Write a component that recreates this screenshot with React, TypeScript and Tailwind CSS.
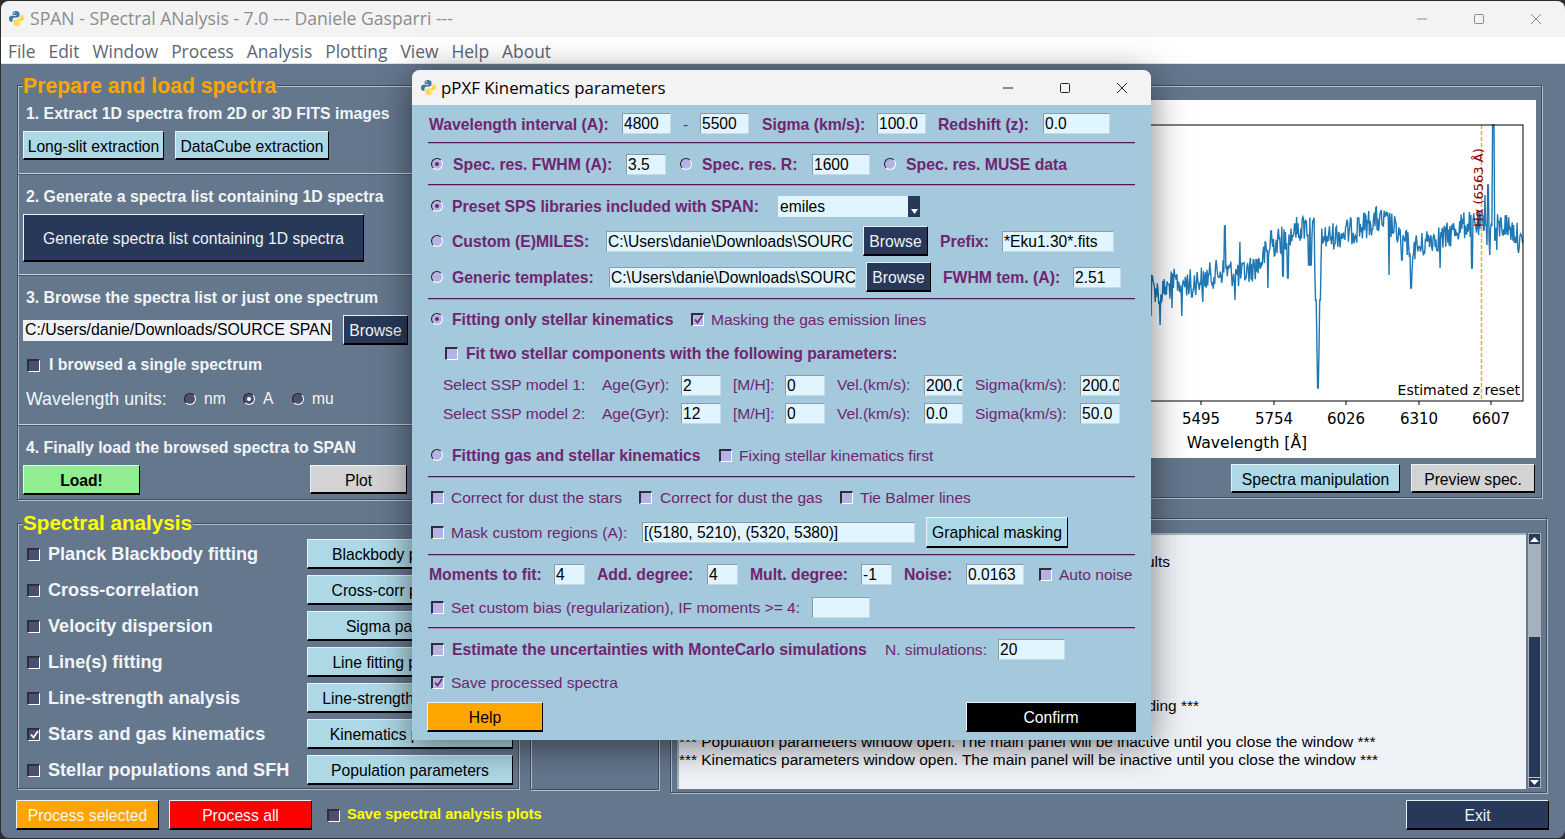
import type { ReactNode } from 'react';

const purple = 'text-[#702570]';

function PyLogo() {
  const snake =
    'M8 1C5.2 1 4.6 2.1 4.6 3.4V5h3.8v.8H3C1.6 5.8 1 7.2 1 8.8s.7 3 2 3h1.5V9.9c0-1.3 1-2.3 2.3-2.3h2.7c1.1 0 2-.9 2-2V3.4C11.5 2 10 1 8 1z';
  return (
    <svg width="17" height="17" viewBox="0 0 17 17" className="shrink-0">
      <path d={snake} fill="#3b77a8" />
      <path d={snake} fill="#ffd845" transform="rotate(180 8.5 8.5)" />
      <circle cx="6.3" cy="3" r=".7" fill="#fff" />
      <circle cx="10.7" cy="14" r=".7" fill="#fff" />
    </svg>
  );
}

function WinButtons({ color, xs }: { color: string; xs: string }) {
  return (
    <div className={`flex items-center ${xs}`}>
      <svg width="12" height="12" viewBox="0 0 12 12">
        <path d="M1 6h10" stroke={color} strokeWidth="1" />
      </svg>
      <svg width="12" height="12" viewBox="0 0 12 12">
        <rect x="1.5" y="1.5" width="9" height="9" rx="1" fill="none" stroke={color} strokeWidth="1" />
      </svg>
      <svg width="12" height="12" viewBox="0 0 12 12">
        <path d="M1 1l10 10M11 1L1 11" stroke={color} strokeWidth="1" />
      </svg>
    </div>
  );
}

function Check({ on, dark, className = '' }: { on?: boolean; dark?: boolean; className?: string }) {
  return (
    <span
      className={`w-[13px] h-[13px] shrink-0 flex items-center justify-center border-t-2 border-l-2 border-b border-r border-t-[#2f2f3a] border-l-[#2f2f3a] border-b-white border-r-white ${
        dark ? 'bg-[#4c5070]' : 'bg-[#b3b3e6]'
      } ${className}`}
    >
      {on && (
        <svg width="9" height="9" viewBox="0 0 9 9">
          <path d="M1 4.5l2.5 3L8 1" fill="none" stroke={dark ? '#fff' : '#702570'} strokeWidth="1.7" />
        </svg>
      )}
    </span>
  );
}

function Radio({ on, dark, className = '' }: { on?: boolean; dark?: boolean; className?: string }) {
  return (
    <span
      className={`w-[12px] h-[12px] shrink-0 rounded-full flex items-center justify-center border border-t-[#222] border-l-[#222] border-b-white border-r-white ${
        dark ? 'bg-[#4c5070]' : 'bg-[#b3b3e6]'
      } ${className}`}
    >
      {on && <span className={`w-[4px] h-[4px] rounded-full ${dark ? 'bg-white' : 'bg-[#702570]'}`} />}
    </span>
  );
}

function Field({ value, className = '' }: { value?: string; className?: string }) {
  return (
    <input
      readOnly
      value={value ?? ''}
      className={`h-[21px] shrink-0 bg-[#e0f5ff] text-black text-[15.6px] leading-[19px] pl-[1px] pt-[1px] border border-t-[#8b9ba8] border-l-[#8b9ba8] border-b-[#c6dbe6] border-r-[#c6dbe6] outline-none ${className}`}
    />
  );
}

function Bold({ children, className = '' }: { children: ReactNode; className?: string }) {
  return <span className={`font-bold text-[15.75px] pt-[2px] whitespace-nowrap shrink-0 ${purple} ${className}`}>{children}</span>;
}

function Plain({ children, className = '' }: { children: ReactNode; className?: string }) {
  return <span className={`text-[15.55px] pt-[2px] whitespace-nowrap shrink-0 ${purple} ${className}`}>{children}</span>;
}

function Sep() {
  return <div className="h-[2px] mx-[16px] border-t border-[#4d1a55] bg-[#b08cc0]" />;
}

function Btn({ children, className = '' }: { children: ReactNode; className?: string }) {
  return (
    <button
      className={`shrink-0 flex items-center justify-center text-[15.7px] pt-[3px] whitespace-nowrap overflow-hidden border border-t-[#e8f2f6] border-l-[#e8f2f6] border-b-2 border-b-black border-r-black ${className}`}
    >
      {children}
    </button>
  );
}

const darkBtn = 'bg-[#283858] text-[#eef2f6] border-t-[#9aa6b4] border-l-[#9aa6b4]';
const blueBtn = 'bg-[#add8e6] text-black';

const groove = 'border border-[#3f4e60] shadow-[inset_1px_1px_0_#b4bfca,1px_1px_0_#b4bfca]';

function Divider() {
  return <div className="h-[2px] border-t border-[#c5ced8] bg-[#4a5a6c]" />;
}

function Heading({ children, className = '' }: { children: ReactNode; className?: string }) {
  return <div className={`h-[20px] leading-[20px] pl-[3px] font-bold text-[15.85px] text-[#f2f5f8] whitespace-nowrap ${className}`}>{children}</div>;
}

const analyses = [
  { label: 'Planck Blackbody fitting', btn: 'Blackbody parameters' },
  { label: 'Cross-correlation', btn: 'Cross-corr parameters' },
  { label: 'Velocity dispersion', btn: 'Sigma parameters' },
  { label: 'Line(s) fitting', btn: 'Line fitting parameters' },
  { label: 'Line-strength analysis', btn: 'Line-strength parameters' },
  { label: 'Stars and gas kinematics', btn: 'Kinematics parameters', on: true },
  { label: 'Stellar populations and SFH', btn: 'Population parameters' },
];

// spectrum, in page coordinates
const baseline: [number, number][] = [
  [1151, 284], [1160, 294], [1175, 282], [1190, 283], [1205, 278], [1225, 270], [1240, 276], [1260, 263],
  [1270, 246], [1285, 238], [1300, 228], [1310, 226], [1325, 238], [1345, 233], [1360, 228], [1375, 220],
  [1390, 224], [1405, 243], [1420, 248], [1430, 238], [1445, 238], [1460, 226], [1475, 224], [1490, 230],
  [1505, 225], [1515, 232], [1523, 248],
];
const spikes: Record<number, number> = {
  1151: 316, 1160: 325, 1172: 308, 1182: 316, 1192: 297, 1203: 302, 1225: 226, 1235: 300, 1240: 242, 1268: 288,
  1271: 231, 1283: 276, 1288: 278, 1295: 224, 1305: 222, 1309: 265, 1311: 265, 1313: 221, 1315: 270, 1316: 300,
  1317: 345, 1318: 388, 1319: 350, 1320: 300, 1321: 260, 1358: 218, 1366: 216, 1389: 275, 1394: 232, 1402: 260,
  1411: 288, 1412: 270, 1440: 268, 1472: 268, 1484: 230, 1485: 195, 1486: 225, 1487: 245, 1488: 185, 1489: 240,
  1490: 255, 1492: 225, 1493: 125, 1494: 125, 1495: 240, 1497: 250,
};

function spectrumPoints() {
  let seed = 12345;
  const pts: string[] = [];
  for (let x = 1130; x <= 1523; x += 0.7) {
    const px = Math.round(x);
    let i = 0;
    while (i < baseline.length - 2 && baseline[i + 1][0] < x) i++;
    const [x0, y0] = baseline[i];
    const [x1, y1] = baseline[i + 1];
    const base = y0 + ((y1 - y0) * (x - x0)) / (x1 - x0);
    seed = (seed * 1103515245 + 12345) % 2147483648;
    const noise = (seed / 2147483648 - 0.5) * 28;
    pts.push(`${x.toFixed(1)},${(spikes[px] ?? base + noise).toFixed(1)}`);
  }
  return pts.join(' ');
}

function Chart() {
  const ticks = [
    { x: 1201, t: '5495' },
    { x: 1274, t: '5754' },
    { x: 1346, t: '6026' },
    { x: 1419, t: '6310' },
    { x: 1491, t: '6607' },
  ];
  return (
    <svg width="400" height="358" viewBox="1136 100 400 358" className="block bg-white" fontFamily="'DejaVu Sans', sans-serif">
      <polyline points={spectrumPoints()} fill="none" stroke="#1f77b4" strokeWidth="1.4" />
      <path d="M1481.5 125V401" stroke="#ffa500" strokeWidth="1.4" strokeDasharray="4 2" />
      <rect x="1100" y="125" width="423" height="276" fill="none" stroke="#000" strokeWidth="1" />
      {ticks.map((t) => (
        <g key={t.t}>
          <path d={`M${t.x} 401v4`} stroke="#000" strokeWidth="1" />
          <text x={t.x} y="424" textAnchor="middle" fontSize="15" fill="#000">
            {t.t}
          </text>
        </g>
      ))}
      <text x="1247" y="448" textAnchor="middle" fontSize="15.6" fill="#000">
        Wavelength [Å]
      </text>
      <text x="1520" y="395" textAnchor="end" fontSize="14" fill="#000">
        Estimated z reset
      </text>
      <text transform="translate(1483 227) rotate(-90)" fontSize="13" fill="#8b0000">
        Hα (6563 Å)
      </text>
    </svg>
  );
}

function KinematicsDialog() {
  return (
    <div className="absolute left-[412px] top-[70px] w-[739px] h-[670px] rounded-t-lg overflow-hidden bg-[#a4c8dc] shadow-[0_6px_36px_rgba(0,0,0,0.5)]">
      <div className="h-[35px] bg-[#f3f3f3] flex items-center pl-[8px] font-['Open_Sans',sans-serif] text-[16.85px] text-black relative">
        <PyLogo />
        <span className="ml-[4px]">pPXF Kinematics parameters</span>
        <WinButtons color="#222" xs="absolute left-[590px] gap-[45px]" />
      </div>

      {/* Wavelength row */}
      <div className="h-[37px] flex items-center pl-[17px]">
        <Bold className="w-[193px]">Wavelength interval (A):</Bold>
        <Field value="4800" className="w-[49px]" />
        <Plain className="w-[29px] text-center">-</Plain>
        <Field value="5500" className="w-[49px]" />
        <Bold className="w-[128px] pl-[13px]">Sigma (km/s):</Bold>
        <Field value="100.0" className="w-[49px]" />
        <Bold className="ml-[12px] w-[105px]">Redshift (z):</Bold>
        <Field value="0.0" className="w-[67px]" />
      </div>
      <Sep />
      <div className="h-[40px] flex items-center pl-[19px]">
        <Radio on />
        <Bold className="ml-[10px] w-[173px]">Spec. res. FWHM (A):</Bold>
        <Field value="3.5" className="w-[40px]" />
        <Radio className="ml-[14px]" />
        <Bold className="ml-[10px] w-[110px]">Spec. res. R:</Bold>
        <Field value="1600" className="w-[58px]" />
        <Radio className="ml-[14px]" />
        <Bold className="ml-[10px]">Spec. res. MUSE data</Bold>
      </div>
      <Sep />
      <div className="h-[40px] flex items-center pl-[19px]">
        <Radio on />
        <Bold className="ml-[9px] w-[326px]">Preset SPS libraries included with SPAN:</Bold>
        <div className="w-[142px] h-[21px] bg-[#e0f5ff] flex justify-between pl-[2px] text-[15.6px] leading-[21px] text-black">
          emiles
          <span className="w-[12px] h-[21px] bg-[#283858] flex items-end justify-center pb-[3px]">
            <svg width="7" height="5" viewBox="0 0 7 5">
              <path d="M0 0h7L3.5 5z" fill="#fff" />
            </svg>
          </span>
        </div>
      </div>
      <div className="h-[30px] flex items-center pl-[19px]">
        <Radio />
        <Bold className="ml-[9px] w-[154px]">Custom (E)MILES:</Bold>
        <Field value="C:\Users\danie\Downloads\SOURCE SPAN" className="w-[247px]" />
        <Btn className={`w-[65px] h-[30px] ml-[10px] ${darkBtn}`}>Browse</Btn>
        <Bold className="ml-[12px] w-[62px]">Prefix:</Bold>
        <Field value="*Eku1.30*.fits" className="w-[112px]" />
      </div>
      <div className="h-[42px] flex items-center pl-[19px]">
        <Radio />
        <Bold className="ml-[9px] w-[157px]">Generic templates:</Bold>
        <Field value="C:\Users\danie\Downloads\SOURCE SPAN" className="w-[247px]" />
        <Btn className={`w-[65px] h-[30px] ml-[10px] ${darkBtn}`}>Browse</Btn>
        <Bold className="ml-[12px] w-[130px]">FWHM tem. (A):</Bold>
        <Field value="2.51" className="w-[48px]" />
      </div>
      <Sep />
      <div className="h-[38px] flex items-center pl-[19px]">
        <Radio on />
        <Bold className="ml-[9px] w-[239px]">Fitting only stellar kinematics</Bold>
        <Check on />
        <Plain className="ml-[7px]">Masking the gas emission lines</Plain>
      </div>
      <div className="h-[30px] flex items-center pl-[33px]">
        <Check />
        <Bold className="ml-[8px]">Fit two stellar components with the following parameters:</Bold>
      </div>
      <div className="h-[32px] flex items-end pb-[4px] pl-[31px]">
        <Plain className="w-[159px]">Select SSP model 1:</Plain>
        <Plain className="w-[79px]">Age(Gyr):</Plain>
        <Field value="2" className="w-[40px]" />
        <Plain className="w-[64px] pl-[12px]">[M/H]:</Plain>
        <Field value="0" className="w-[40px]" />
        <Plain className="w-[99px] pl-[12px]">Vel.(km/s):</Plain>
        <Field value="200.0" className="w-[39px]" />
        <Plain className="w-[117px] pl-[12px]">Sigma(km/s):</Plain>
        <Field value="200.0" className="w-[40px]" />
      </div>
      <div className="h-[26px] flex items-center pl-[31px]">
        <Plain className="w-[159px]">Select SSP model 2:</Plain>
        <Plain className="w-[79px]">Age(Gyr):</Plain>
        <Field value="12" className="w-[40px]" />
        <Plain className="w-[64px] pl-[12px]">[M/H]:</Plain>
        <Field value="0" className="w-[40px]" />
        <Plain className="w-[99px] pl-[12px]">Vel.(km/s):</Plain>
        <Field value="0.0" className="w-[39px]" />
        <Plain className="w-[117px] pl-[12px]">Sigma(km/s):</Plain>
        <Field value="50.0" className="w-[40px]" />
      </div>
      <div className="h-[42px] mt-[8px] flex items-center pl-[19px]">
        <Radio />
        <Bold className="ml-[9px] w-[267px]">Fitting gas and stellar kinematics</Bold>
        <Check />
        <Plain className="ml-[7px]">Fixing stellar kinematics first</Plain>
      </div>
      <Sep />
      <div className="h-[38px] flex items-center pl-[19px]">
        <Check />
        <Plain className="ml-[7px] w-[188px]">Correct for dust the stars</Plain>
        <Check />
        <Plain className="ml-[8px] w-[180px]">Correct for dust the gas</Plain>
        <Check />
        <Plain className="ml-[7px]">Tie Balmer lines</Plain>
      </div>
      <div className="h-[32px] mb-[6px] flex items-center pl-[19px]">
        <Check />
        <Plain className="ml-[7px] w-[191px]">Mask custom regions (A):</Plain>
        <Field value="[(5180, 5210), (5320, 5380)]" className="w-[273px]" />
        <Btn className={`w-[142px] h-[31px] ml-[11px] ${blueBtn}`}>Graphical masking</Btn>
      </div>
      <Sep />
      <div className="h-[36px] flex items-center pl-[17px]">
        <Bold className="w-[125px]">Moments to fit:</Bold>
        <Field value="4" className="w-[31px]" />
        <Bold className="w-[122px] pl-[12px]">Add. degree:</Bold>
        <Field value="4" className="w-[31px]" />
        <Bold className="w-[123px] pl-[12px]">Mult. degree:</Bold>
        <Field value="-1" className="w-[31px]" />
        <Bold className="w-[74px] pl-[12px]">Noise:</Bold>
        <Field value="0.0163" className="w-[58px]" />
        <Check className="ml-[15px]" />
        <Plain className="ml-[7px]">Auto noise</Plain>
      </div>
      <div className="h-[30px] mb-[5px] flex items-center pl-[19px]">
        <Check />
        <Plain className="ml-[7px] w-[361px]">Set custom bias (regularization), IF moments &gt;= 4:</Plain>
        <Field className="w-[58px]" />
      </div>
      <Sep />
      <div className="h-[40px] flex items-center pl-[19px]">
        <Check />
        <Bold className="ml-[8px] w-[433px]">Estimate the uncertainties with MonteCarlo simulations</Bold>
        <Plain className="w-[113px]">N. simulations:</Plain>
        <Field value="20" className="w-[67px]" />
      </div>
      <div className="h-[26px] flex items-center pl-[19px]">
        <Check on />
        <Plain className="ml-[7px]">Save processed spectra</Plain>
      </div>
      <div className="mt-[7px] flex justify-between px-[15px]">
        <Btn className="w-[116px] h-[30px] bg-[#ffa500] text-black">Help</Btn>
        <Btn className="w-[170px] h-[30px] bg-black text-white border-t-[#777] border-l-[#777]">Confirm</Btn>
      </div>
    </div>
  );
}

export default function App() {
  return (
    <div className="relative w-[1565px] h-[839px] overflow-hidden bg-[#2e2e2e] pt-[1px] pl-[1px] font-['Liberation_Sans',sans-serif]">
      <div className="w-[1564px] h-[837px] rounded-lg overflow-hidden flex flex-col bg-[#64778d]">
        <div className="h-[36px] pb-[1px] shrink-0 bg-[#f3f3f3] flex items-center pl-[7px] font-['Open_Sans',sans-serif] text-[17.6px] text-[#8c8c8c] relative">
          <PyLogo />
          <span className="ml-[5px]">SPAN - SPectral ANalysis - 7.0 --- Daniele Gasparri ---</span>
          <WinButtons color="#8c8c8c" xs="absolute left-[1415px] gap-[45px]" />
        </div>
        <div className="h-[27px] pt-[2px] shrink-0 bg-white border-b border-[#e2e4e8] flex items-center pl-[7px] gap-[13px] font-['Open_Sans',sans-serif] text-[17.4px] text-[#5b6673]">
          {['File', 'Edit', 'Window', 'Process', 'Analysis', 'Plotting', 'View', 'Help', 'About'].map((m) => (
            <span key={m}>{m}</span>
          ))}
        </div>

        <div className="flex pt-[21px] pl-[16px]">
          {/* left column */}
          <div className="w-[502px] shrink-0">
            <div className={`relative h-[415px] ${groove}`}>
              <span className="absolute left-[5px] top-[-13px] bg-[#64778d] pr-[1px] font-bold text-[21.2px] leading-[25px] text-[#ffa500] whitespace-nowrap">
                Prepare and load spectra
              </span>
              <div className="h-[87px] pl-[5px] pt-[18px]">
                <Heading>1. Extract 1D spectra from 2D or 3D FITS images</Heading>
                <div className="flex gap-[11px] mt-[7px]">
                  <Btn className={`w-[141px] h-[29px] ${blueBtn}`}>Long-slit extraction</Btn>
                  <Btn className={`w-[154px] h-[29px] ${blueBtn}`}>DataCube extraction</Btn>
                </div>
              </div>
              <Divider />
              <div className="h-[99px] pl-[5px] pt-[12px]">
                <Heading>2. Generate a spectra list containing 1D spectra</Heading>
                <Btn className={`w-[341px] h-[48px] mt-[7px] ${darkBtn}`}>Generate spectra list containing 1D spectra</Btn>
              </div>
              <Divider />
              <div className="h-[148px] pl-[5px] pt-[12px]">
                <Heading>3. Browse the spectra list or just one spectrum</Heading>
                <div className="flex items-center h-[30px] mt-[7px]">
                  <input
                    readOnly
                    value="C:/Users/danie/Downloads/SOURCE SPAN"
                    className="w-[309px] h-[21px] bg-[#eff3f8] text-black text-[15.85px] pl-[2px] outline-none"
                  />
                  <Btn className={`w-[65px] h-[30px] ml-[11px] ${darkBtn}`}>Browse</Btn>
                </div>
                <div className="flex items-center h-[20px] mt-[10px] pl-[4px] gap-[9px] font-bold text-[15.85px] text-[#f2f5f8]">
                  <Check dark />
                  I browsed a single spectrum
                </div>
                <div className="flex items-center h-[20px] mt-[14px] pl-[3px] text-[#f2f5f8] text-[15.6px]">
                  <span className="text-[17.8px] w-[158px] whitespace-nowrap">Wavelength units:</span>
                  <Radio dark />
                  <span className="ml-[8px] w-[39px]">nm</span>
                  <Radio dark on />
                  <span className="ml-[8px] w-[29px]">A</span>
                  <Radio dark />
                  <span className="ml-[8px]">mu</span>
                </div>
              </div>
              <Divider />
              <div className="pl-[5px] pt-[12px]">
                <Heading>4. Finally load the browsed spectra to SPAN</Heading>
                <div className="flex mt-[7px]">
                  <Btn className="w-[117px] h-[30px] bg-[#90ee90] text-black font-bold">Load!</Btn>
                  <Btn className="w-[97px] h-[29px] ml-[170px] bg-[#d3d3d3] text-black">Plot</Btn>
                </div>
              </div>
            </div>

            <div className={`relative h-[266px] mt-[23px] pt-[15px] pl-[9px] flex flex-col gap-[6px] ${groove}`}>
              <span className="absolute left-[5px] top-[-14px] bg-[#64778d] pr-[1px] font-bold text-[20.7px] leading-[25px] text-[#ffff00] whitespace-nowrap">
                Spectral analysis
              </span>
              {analyses.map((a) => (
                <div key={a.label} className="flex items-center h-[30px]">
                  <Check dark on={a.on} />
                  <span className="ml-[8px] w-[259px] pt-[2px] font-bold text-[18.1px] text-[#f2f5f8] whitespace-nowrap">{a.label}</span>
                  <Btn className={`w-[206px] h-[30px] ${blueBtn}`}>{a.btn}</Btn>
                </div>
              ))}
            </div>
          </div>

          {/* right column */}
          <div className="ml-[11px] flex flex-col">
            <div className={`w-[1012px] h-[413px] flex flex-col items-end pt-[14px] pr-[5px] ${groove}`}>
              <Chart />
              <div className="flex gap-[11px] mt-[6px] mr-[1px]">
                <Btn className={`w-[169px] h-[29px] ${blueBtn}`}>Spectra manipulation</Btn>
                <Btn className="w-[124px] h-[29px] bg-[#d3d3d3] text-black">Preview spec.</Btn>
              </div>
            </div>
            <div className="flex mt-[20px]">
              <div className={`w-[129px] h-[267px] mt-[5px] ${groove}`} />
              <div className={`w-[877px] h-[275px] ml-[11px] pl-[6px] pt-[14px] flex ${groove}`}>
                <div className="w-[849px] h-[256px] bg-[#eff3f8] border-t-2 border-l-2 border-[#a5b1bd] text-[15.45px] leading-[18px] text-black pt-[18px] whitespace-nowrap overflow-hidden">
                  <div className="w-[491px] text-right">Results</div>
                  <div className="h-[126px]" />
                  <div className="w-[520px] text-right">Reading ***</div>
                  <div className="h-[18px]" />
                  <div>*** Population parameters window open. The main panel will be inactive until you close the window ***</div>
                  <div>*** Kinematics parameters window open. The main panel will be inactive until you close the window ***</div>
                </div>
                <div className="w-[13px] h-[255px] ml-[2px] flex flex-col border border-white/60 bg-[#283858]">
                  <span className="h-[10px] flex items-center justify-center">
                    <svg width="9" height="5" viewBox="0 0 9 5">
                      <path d="M0 5h9L4.5 0z" fill="#fff" />
                    </svg>
                  </span>
                  <span className="h-[93px] bg-[#a5b1bd]" />
                  <span className="flex-1" />
                  <span className="h-[10px] flex items-center justify-center border-t border-white/70">
                    <svg width="9" height="5" viewBox="0 0 9 5">
                      <path d="M0 0h9L4.5 5z" fill="#fff" />
                    </svg>
                  </span>
                </div>
              </div>
            </div>
          </div>
        </div>

        <div className="flex items-center mt-[7px] pl-[15px] pr-[16px]">
          <Btn className="w-[143px] h-[30px] bg-[#ffa500] text-[#f5f5f5]">Process selected</Btn>
          <Btn className="w-[143px] h-[30px] ml-[10px] bg-[#ff0000] text-[#f5f5f5]">Process all</Btn>
          <Check dark className="ml-[15px]" />
          <span className="ml-[7px] font-bold text-[14.6px] text-[#ffff00] whitespace-nowrap">Save spectral analysis plots</span>
          <Btn className={`w-[143px] h-[30px] ml-auto ${darkBtn}`}>Exit</Btn>
        </div>
      </div>

      <KinematicsDialog />
    </div>
  );
}
